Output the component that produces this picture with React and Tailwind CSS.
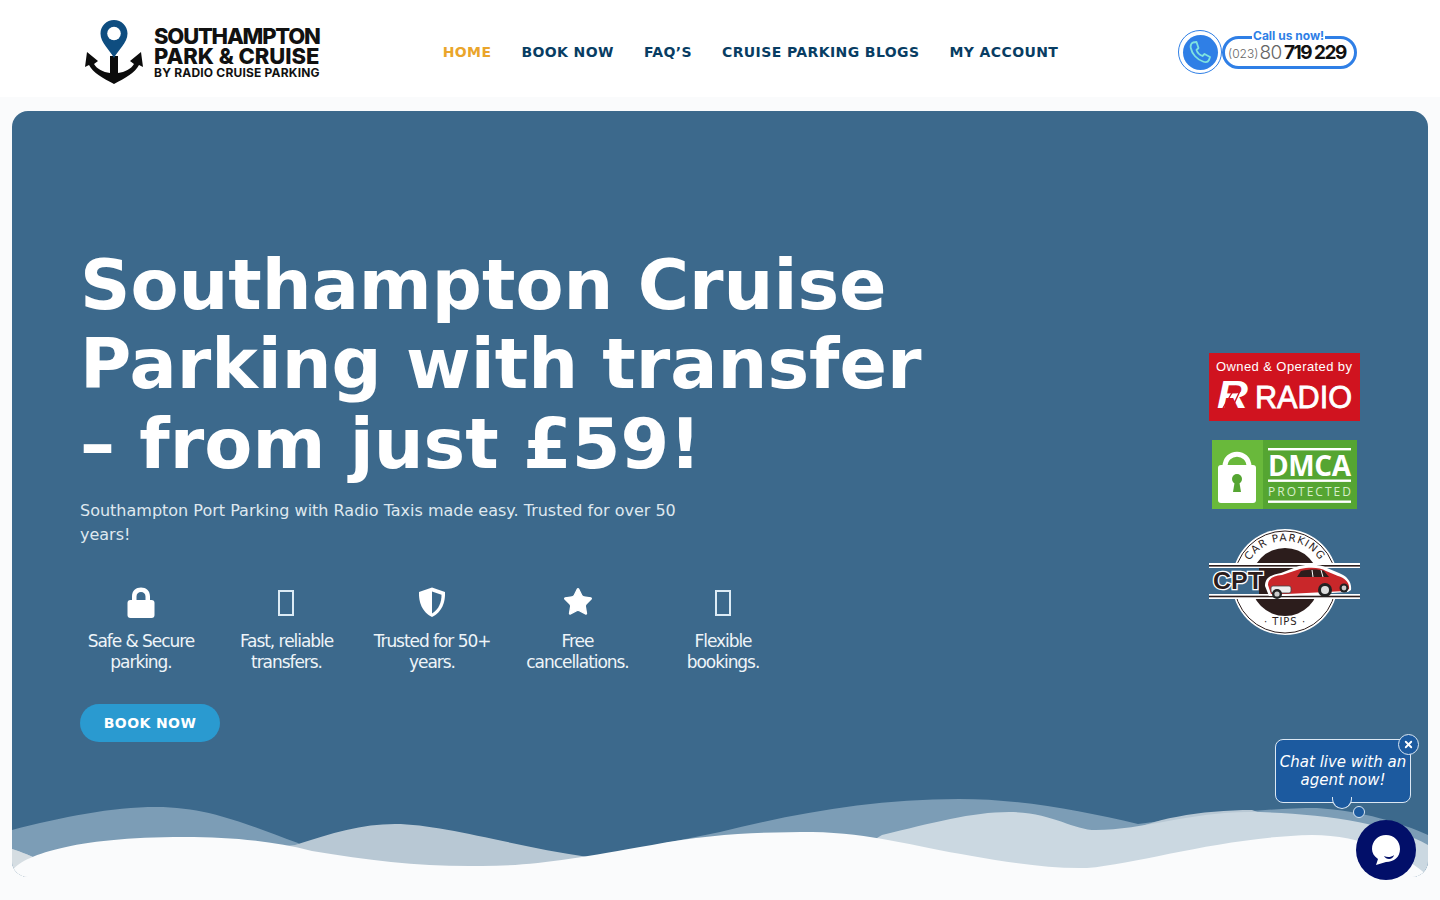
import React from 'react';
import { Star, X } from 'lucide-react';

const NAV = [
  { label: 'HOME', active: true },
  { label: 'BOOK NOW' },
  { label: 'FAQ’S' },
  { label: 'CRUISE PARKING BLOGS' },
  { label: 'MY ACCOUNT' },
];

const Tofu = () => <span className="block w-[16px] h-[26px] mt-[2px] -ml-[1px] border-2 border-[#dcebf5]" />;

function ShieldIcon() {
  return (
    <svg width="28" height="30" viewBox="0 0 28 30">
      <path d="M14 0.5 L27 5 C27.5 15 24 25 14 30 C4 25 0.5 15 1 5 Z" fill="#fff" />
      <path d="M14 4.5 L23.5 7.8 C23.6 15 21 22.5 14 26.4 Z" fill="#3c698c" />
    </svg>
  );
}

function LockIcon() {
  return (
    <svg width="28" height="31" viewBox="0 0 28 31">
      <path d="M5 14 V9.5 C5 3.5 9 0.5 14 0.5 C19 0.5 23 3.5 23 9.5 V14 H18.5 V9.5 C18.5 6.5 16.5 5 14 5 C11.5 5 9.5 6.5 9.5 9.5 V14 Z" fill="#fff" />
      <rect x="0.5" y="13" width="27" height="18" rx="3" fill="#fff" />
    </svg>
  );
}

const FEATURES = [
  { icon: <LockIcon />, text: 'Safe & Secure parking.' },
  { icon: <Tofu />, text: 'Fast, reliable transfers.' },
  { icon: <ShieldIcon />, text: 'Trusted for 50+ years.' },
  { icon: <Star size={32} fill="#fff" stroke="#fff" strokeWidth={1} />, text: 'Free cancellations.' },
  { icon: <Tofu />, text: 'Flexible bookings.' },
];

const Logo = () => (
  <div className="flex items-center gap-[12px] ml-[85px] w-[240px] shrink-0">
    <svg width="58" height="66" viewBox="0 0 58 66" className="shrink-0">
      <path d="M25 37 H33 V54 C40 53 46 50 49 45 L45 42 L56 33 L58 48 L54 46 C50 54 40 59 29 65 C18 59 8 54 4 46 L0 48 L2 33 L13 42 L9 45 C12 50 18 53 25 54 Z" fill="#0c0c0c" />
      <path d="M29 1 C36.5 1 42.5 7 42.5 14.5 C42.5 24 33 31 29 39 C25 31 15.5 24 15.5 14.5 C15.5 7 21.5 1 29 1 Z" fill="#0e4d80" />
      <circle cx="29" cy="14.5" r="6.8" fill="#fff" />
    </svg>
    <div className="font-['Inter',sans-serif] text-[#111] whitespace-nowrap -ml-[1px] mt-[1px]">
      <div className="text-[22px] font-extrabold tracking-[-1.2px] leading-[20px]">SOUTHAMPTON</div>
      <div className="text-[22px] font-extrabold tracking-[-0.05px] leading-[20px]">PARK &amp; CRUISE</div>
      <div className="text-[12px] font-bold tracking-[0.2px] leading-[13px]">BY RADIO CRUISE PARKING</div>
    </div>
  </div>
);

const PhoneBadge = () => (
  <div className="relative flex items-center w-[179px] h-[50px] mr-[83px] shrink-0 font-['Inter',sans-serif]">
    <div className="flex items-center justify-center w-[44px] h-[44px] rounded-full border-[1.5px] border-[#2f7fe6] bg-white shrink-0">
      <div className="flex items-center justify-center w-[35px] h-[35px] rounded-full bg-[#2f7fe6]">
        <svg width="24" height="24" viewBox="0 0 24 24">
          <path d="M5 2.5 L8.5 2 L10.5 8 L8.5 10 C9.5 13 11.5 15 14.5 16 L16.5 14 L22 17 L21 20 C20 22 17.5 22.5 15 21.5 C9 19.5 4 14 2.8 8 C2.3 5.5 3 3.5 5 2.5 Z" fill="#2f7fe6" stroke="#7fe3df" strokeWidth="1.8" strokeLinejoin="round" />
        </svg>
      </div>
    </div>
    <div className="flex items-center w-[135px] h-[33px] mt-[1px] pl-[3px] pt-[2px] rounded-[17px] border-[3px] border-[#2f7fe6] bg-white whitespace-nowrap text-[#666]">
      <span className="text-[12px] font-light">(023)</span>
      <span className="text-[19px] font-light tracking-[-0.4px] ml-[1px]">80</span>
      <span className="text-[19px] font-bold text-[#111] tracking-[-1.5px] ml-[2px]">719 229</span>
    </div>
    <span className="absolute left-[74px] top-[2px] bg-white px-[1px] text-[12px] leading-[14px] font-bold text-[#2f7fe6] whitespace-nowrap">Call us now!</span>
  </div>
);

const RadioBadge = () => (
  <svg width="151" height="68" viewBox="0 0 151 68" className="block">
    <rect width="151" height="68" fill="#d0131f" />
    <text x="7" y="18" fontFamily="Liberation Sans, sans-serif" fontSize="13" fill="#fff" textLength="136">Owned &amp; Operated by</text>
    <text x="8" y="55" fontFamily="Liberation Sans, sans-serif" fontSize="38" fontWeight="700" fontStyle="italic" fill="#fff" textLength="31" lengthAdjust="spacingAndGlyphs">R</text>
    <path d="M14 55 L27 33 M23 55 L31 38" stroke="#d0131f" strokeWidth="1.4" />
    <text x="46" y="55" fontFamily="Liberation Sans, sans-serif" fontSize="32" fill="#fff" stroke="#fff" strokeWidth="0.8" textLength="97" lengthAdjust="spacingAndGlyphs">RADIO</text>
  </svg>
);

const DmcaBadge = () => (
  <svg width="145" height="69" viewBox="0 0 145 69" className="block">
    <rect width="145" height="69" fill="#55a532" />
    <rect width="51" height="69" fill="#69b93b" />
    <path d="M13 27 C13 10 37 10 37 27" fill="none" stroke="#fff" strokeWidth="5" />
    <rect x="6" y="25" width="38" height="38" rx="3" fill="#fff" />
    <circle cx="25" cy="39" r="5" fill="#55a532" />
    <path d="M23 40 L21 52 H29 L27 40 Z" fill="#55a532" />
    <rect x="56" y="8" width="83" height="2.4" fill="#fff" />
    <text x="56" y="36" fontFamily="Open Sans, sans-serif" fontSize="28" fontWeight="700" fill="#fff" textLength="83">DMCA</text>
    <rect x="56" y="39.5" width="83" height="2.4" fill="#fff" />
    <text x="56" y="56" fontFamily="Open Sans, sans-serif" fontSize="12" fill="#d9efcd" textLength="83">PROTECTED</text>
    <rect x="56" y="60.5" width="83" height="2.4" fill="#fff" />
  </svg>
);

const CptBadge = () => (
  <svg width="151" height="108" viewBox="0 0 151 108" className="block">
    <defs>
      <path id="cpt-top" d="M 35 54 A 41 41 0 0 1 117 54" />
    </defs>
    <circle cx="76" cy="54" r="53" fill="#fff" />
    <circle cx="76" cy="54" r="51" fill="none" stroke="#2c1d1c" strokeWidth="1" />
    <circle cx="76" cy="54" r="34" fill="#2c1d1c" />
    <text fontFamily="DejaVu Sans, sans-serif" fontSize="10.5" fill="#2c1d1c" letterSpacing="1.2">
      <textPath href="#cpt-top" startOffset="50%" textAnchor="middle">CAR PARKING</textPath>
    </text>
    <text x="76" y="97" textAnchor="middle" fontFamily="DejaVu Sans, sans-serif" fontSize="10" fill="#2c1d1c" letterSpacing="1">· TIPS ·</text>
    <rect x="0" y="36" width="50" height="33" fill="#3c698c" />
    <rect x="110" y="36" width="41" height="33" fill="#3c698c" />
    <rect x="0" y="35" width="151" height="5" fill="#fff" />
    <rect x="0" y="37" width="151" height="1.6" fill="#2c1d1c" />
    <rect x="0" y="66" width="151" height="5" fill="#fff" />
    <rect x="0" y="67.7" width="151" height="1.6" fill="#2c1d1c" />
    <text x="4" y="61" fontFamily="Liberation Sans, sans-serif" fontSize="24" fontWeight="700" fill="#2c1d1c" stroke="#fff" strokeWidth="2.5" style={{ paintOrder: 'stroke' }} textLength="50" lengthAdjust="spacingAndGlyphs">CPT</text>
    <path d="M56 58 C56 50 61 47 72 45 L90 38 C100 36 112 36 118 40 L130 45 C138 48 143 54 142 62 L139 64 L76 68 L60 68 Z" fill="#fff" />
    <path d="M59 57 C59 51 63 48 73 47 L91 41 C100 39 111 39 117 43 L129 48 C136 50 141 55 140 61 L136 63 L78 66 L62 66 Z" fill="#c9272a" />
    <path d="M92 43 C100 41 110 41 115 43 L120 49 L88 49 Z" fill="#2c1d1c" />
    <path d="M103 42 L104 49 M112 42 L114 49" stroke="#fff" strokeWidth="1" />
    <rect x="62" y="58" width="20" height="7" rx="2" fill="#eee" stroke="#444" strokeWidth="0.8" />
    <circle cx="68" cy="66" r="5" fill="#222" />
    <circle cx="68" cy="66" r="2.6" fill="#ccc" />
    <circle cx="116" cy="62" r="7" fill="#222" />
    <circle cx="116" cy="62" r="4" fill="#ddd" />
    <circle cx="135" cy="60" r="4.5" fill="#222" />
    <circle cx="135" cy="60" r="2.4" fill="#ccc" />
  </svg>
);

// hero bottom waves, coords are hero local (x - 12, y - 111)
const Waves = () => (
  <svg className="absolute left-0 bottom-0 block" width="1416" height="120" viewBox="0 646 1416 120" preserveAspectRatio="none">
    <path d="M0 719 C50 706 100 696 144 696 C200 696 240 716 286 732 L320 760 L570 750 L585 746 L708 721 C780 703 860 688 947 688 C1010 688 1070 700 1126 713 C1180 706 1250 697 1305 697 C1350 700 1390 712 1416 724 V766 H0 Z" fill="#7c9db6" />
    <path d="M0 738 C24 745 40 760 70 755 L283 734 C320 722 350 713 383 713 C430 713 500 735 576 746 L720 760 L1110 725 C1135 708 1190 699 1240 699 L1416 760 V766 H0 Z" fill="#b8c8d4" />
    <path d="M0 738 C24 745 40 760 70 755 V766 H0 Z" fill="#d5dde2" />
    <path d="M870 724 C920 712 960 701 997 701 C1040 701 1060 719 1084 719 C1130 719 1180 701 1236 701 C1300 701 1380 712 1416 734 V766 H800 Z" fill="#cbd8e1" />
    <path d="M0 760 C10 745 60 726 172 726 C220 726 260 730 300 740 C360 750 410 756 470 755 C520 755 560 748 640 734 C700 722 760 721 800 721 C860 722 900 735 960 745 C1000 752 1040 758 1075 757 C1130 752 1210 726 1300 724 C1350 724 1395 745 1416 765 V766 H0 Z" fill="#fafbfc" />
  </svg>
);

const ChatWidget = () => (
  <div className="fixed left-[1275px] top-[735px] w-[145px] h-[150px] font-['DejaVu_Sans',sans-serif]">
    <div className="absolute left-0 top-[4px] w-[136px] h-[64px] rounded-[8px] border border-[#dbe7f3] bg-[#1c5a9f] flex items-center justify-center text-center text-white italic text-[15px] leading-[18px] whitespace-nowrap">
      <span>Chat live with an<br />agent now!</span>
    </div>
    <span className="absolute left-[57px] top-[62px] w-[20px] h-[12px] rounded-b-full border-b border-x border-[#dbe7f3] bg-[#1c5a9f]" />
    <span className="absolute left-[78px] top-[71px] w-[12px] h-[12px] rounded-full border border-[#dbe7f3] bg-[#1c5a9f]" />
    <span className="absolute left-[123px] top-[-1px] w-[21px] h-[21px] rounded-full border border-[#dbe7f3] bg-[#1c5a9f] flex items-center justify-center">
      <X size={11} color="#fff" strokeWidth={4} />
    </span>
    <div className="absolute left-[81px] top-[85px] w-[60px] h-[60px] rounded-full bg-[#020f69] flex items-center justify-center">
      <svg width="30" height="32" viewBox="0 0 30 32">
        <path d="M15 1 C23 1 29 7 29 15 C29 23 23 28 15 28 L5 31 L7 25 C3 22 1 19 1 15 C1 7 7 1 15 1 Z" fill="#fff" />
        <path d="M13 22 C16 23.5 20 23.5 23 21 C22 26 15 26 13 22 Z" fill="#020f69" />
      </svg>
    </div>
  </div>
);

export default function App() {
  return (
    <div className="min-h-screen h-[900px] overflow-hidden bg-[#fafbfc] font-['DejaVu_Sans',sans-serif]">
      <header className="flex items-center justify-between h-[97px] pt-[7px] bg-white">
        <Logo />
        <nav className="flex items-center gap-[30px] -ml-[2px]">
          {NAV.map((item) => (
            <a key={item.label} className={`text-[14px] font-bold tracking-[0.4px] whitespace-nowrap ${item.active ? 'text-[#eaa52b]' : 'text-[#083d63]'}`}>
              {item.label}
            </a>
          ))}
        </nav>
        <PhoneBadge />
      </header>

      <section className="relative mx-[12px] mt-[14px] h-[766px] rounded-[16px] overflow-hidden bg-[#3c698c] flex items-center justify-between pl-[68px] pr-[68px]">
        <div className="w-[860px]">
          <h1 className="text-[70px] font-bold leading-[79.5px] text-white">
            Southampton Cruise<br />Parking with transfer<br />– from just £59!
          </h1>
          <p className="mt-[15px] w-[620px] text-[16px] leading-[24px] text-[#dfe8ef]">
            Southampton Port Parking with Radio Taxis made easy. Trusted for over 50 years!
          </p>
          <div className="flex gap-[23.5px] mt-[39px]">
            {FEATURES.map((f) => (
              <div key={f.text} className="w-[122px] flex flex-col items-center text-center">
                <div className="h-[32px] flex items-center justify-center">{f.icon}</div>
                <p className="mt-[13px] text-[17px] leading-[21px] tracking-[-1.05px] text-[#eef4f8]">{f.text}</p>
              </div>
            ))}
          </div>
          <button className="mt-[31px] w-[140px] h-[38px] rounded-full bg-[#2a9ad0] text-white text-[14px] font-bold tracking-[0.4px]">
            BOOK NOW
          </button>
        </div>

        <div className="flex flex-col items-center gap-[19px] w-[151px] shrink-0">
          <RadioBadge />
          <DmcaBadge />
          <CptBadge />
        </div>

        <Waves />
      </section>

      <ChatWidget />
    </div>
  );
}
